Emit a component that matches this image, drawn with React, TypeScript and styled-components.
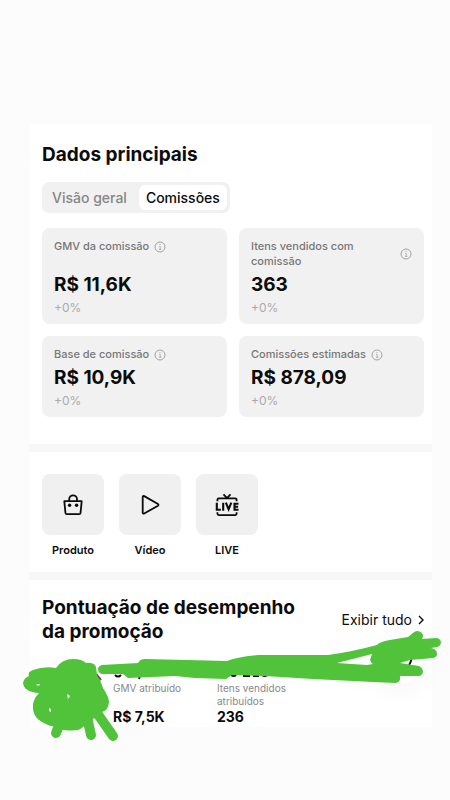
import React from "react";
import styled, { createGlobalStyle } from "styled-components";

const GlobalStyle = createGlobalStyle`
  * { box-sizing: border-box; }
  body {
    margin: 0;
    background: #fcfcfc;
    color: #0b0b0b;
    font-family: Inter, "Noto Sans", sans-serif;
  }
  h2, p, dl, dt, dd { margin: 0; }
  button { font: inherit; color: inherit; border: 0; padding: 0; background: none; cursor: pointer; }
`;

const Page = styled.main`
  padding: 124px 18px 74px 30px;
`;

const Panel = styled.div`
  background: #fff;
`;

const Section = styled.section<{ $pad: string }>`
  position: relative;
  padding: ${(p) => p.$pad};
  & + & { border-top: 8px solid #f7f7f7; }
`;

const Title = styled.h2`
  font-size: 19px;
  line-height: 24px;
  font-weight: 700;
`;

const Tabs = styled.div`
  display: inline-flex;
  margin: 15px 0;
  padding: 3px;
  border-radius: 7px;
  background: #f1f1f1;
`;

const Tab = styled.button<{ $active?: boolean }>`
  && {
    height: 25px;
    padding: 0 7px;
    border-radius: 6px;
    font-size: 14px;
    font-weight: 500;
    color: ${(p) => (p.$active ? "#0b0b0b" : "#868686")};
    background: ${(p) => (p.$active ? "#fff" : "transparent")};
  }
  & + & { margin-left: 5px; }
`;

const Cards = styled.div`
  display: grid;
  grid-template-columns: 1fr 1fr;
  gap: 12px;
`;

const Card = styled.article`
  display: flex;
  flex-direction: column;
  padding: 11px 12px 8px;
  border-radius: 8px;
  background: #f1f1f1;
`;

const CardLabel = styled.div`
  display: flex;
  align-items: center;
  gap: 5px;
  font-size: 11px;
  line-height: 15px;
  font-weight: 500;
  color: #777;
  svg { flex: none; }
`;

const Value = styled.strong`
  margin-top: auto;
  padding-top: 4px;
  font-size: 19px;
  line-height: 24px;
  font-weight: 700;
`;

const Delta = styled.span`
  margin-top: 3px;
  font-size: 12px;
  line-height: 16px;
  color: #aaa;
`;

const Shortcuts = styled.nav`
  display: flex;
  gap: 15px;
`;

const Shortcut = styled.button`
  display: flex;
  flex-direction: column;
  align-items: center;
  gap: 8px;
  && { font-size: 11px; line-height: 14px; font-weight: 600; }
`;

const Tile = styled.span`
  display: grid;
  place-items: center;
  width: 62px;
  height: 61px;
  border-radius: 8px;
  background: #f0f0f0;
`;

const ScoreHeader = styled.div`
  display: flex;
  align-items: center;
  justify-content: space-between;
  gap: 24px;
`;

const ShowAll = styled.a`
  display: flex;
  align-items: center;
  gap: 6px;
  flex: none;
  font-size: 14px;
  line-height: 20px;
  color: inherit;
  text-decoration: none;
`;

const ScoreStats = styled.dl`
  display: grid;
  grid-template-columns: 104px 104px;
  margin: 38px 0 0 71px;
`;

const Stat = styled.div`
  display: flex;
  flex-direction: column;
  dt { font-size: 10px; line-height: 13px; color: #888; width: 88px; }
  dd { margin-top: auto; font-size: 14px; line-height: 17px; font-weight: 700; }
`;

const FloatingButton = styled.button`
  && {
    position: absolute;
    right: 10px;
    top: 60px;
    width: 44px;
    height: 44px;
    border-radius: 50%;
    background: #fefefe;
    box-shadow: 0 4px 28px rgba(0, 0, 0, 0.05);
  }
`;

const Scribble = styled.svg`
  position: absolute;
  left: -30px;
  top: 50px;
  width: 450px;
  height: 116px;
  pointer-events: none;
`;

const InfoIcon = () => (
  <svg width="12" height="12" viewBox="0 0 12 12" fill="none" stroke="#a3a3a3" aria-hidden="true">
    <circle cx="6" cy="6" r="5" />
    <path d="M5.2 5.3H6.2v3M5 8.4h2.4" strokeWidth=".8" />
    <circle cx="6" cy="3.5" r=".6" fill="#a3a3a3" stroke="none" />
  </svg>
);

const BagIcon = () => (
  <svg width="24" height="24" viewBox="0 0 24 24" fill="none" stroke="#0b0b0b" strokeWidth="1.8" strokeLinejoin="round" aria-hidden="true">
    <path d="M3.3 8.2h17.4l-1.2 12a1.2 1.2 0 0 1-1.2 1H5.7a1.2 1.2 0 0 1-1.2-1z" />
    <path d="M8.2 8V6.2a3.9 3.9 0 0 1 7.8 0V8" />
    <circle cx="8.6" cy="12.3" r="1.7" fill="#0b0b0b" stroke="none" />
    <circle cx="15.6" cy="12.3" r="1.7" fill="#0b0b0b" stroke="none" />
  </svg>
);

const PlayIcon = () => (
  <svg width="24" height="24" viewBox="0 0 24 24" fill="none" stroke="#0b0b0b" strokeWidth="1.8" strokeLinejoin="round" aria-hidden="true">
    <path d="M6.2 3.1 20 11a1 1 0 0 1 0 1.7L6.2 20.5a1 1 0 0 1-1.5-.9V4a1 1 0 0 1 1.5-.9z" />
  </svg>
);

const LiveIcon = () => (
  <svg width="26" height="24" viewBox="0 0 26 24" fill="none" stroke="#0b0b0b" strokeWidth="1.8" aria-hidden="true">
    <path d="M9.5 1.3 13 5l3.5-3.7M3.4 8.2V6.8A1.5 1.5 0 0 1 4.9 5.3h16.2a1.5 1.5 0 0 1 1.5 1.5v1.4M3.4 19.2v1.4a1.5 1.5 0 0 0 1.5 1.5h16.2a1.5 1.5 0 0 0 1.5-1.5v-1.4" />
    <g strokeWidth="2.1">
      <path d="M2.8 9.7v7h4M9.2 9.7v8M11.9 9.7l2.7 6.6 2.7-6.6M24.5 10.7h-4v6h4M20.5 13.7h3.6" />
    </g>
  </svg>
);

const metrics = [
  { label: "GMV da comissão", value: "R$ 11,6K" },
  { label: "Itens vendidos com comissão", value: "363" },
  { label: "Base de comissão", value: "R$ 10,9K" },
  { label: "Comissões estimadas", value: "R$ 878,09" },
];

const shortcuts = [
  { label: "Produto", icon: <BagIcon /> },
  { label: "Vídeo", icon: <PlayIcon /> },
  { label: "LIVE", icon: <LiveIcon /> },
];

export default function App() {
  return (
    <>
      <GlobalStyle />
      <Page>
        <Panel>
          <Section $pad="19px 8px 27px 12px">
            <Title>Dados principais</Title>
            <Tabs role="tablist">
              <Tab role="tab" aria-selected={false}>Visão geral</Tab>
              <Tab role="tab" aria-selected $active>Comissões</Tab>
            </Tabs>
            <Cards>
              {metrics.map((m) => (
                <Card key={m.label}>
                  <CardLabel>
                    <span>{m.label}</span>
                    <InfoIcon />
                  </CardLabel>
                  <Value>{m.value}</Value>
                  <Delta>+0%</Delta>
                </Card>
              ))}
            </Cards>
          </Section>

          <Section $pad="22px 8px 15px 12px">
            <Shortcuts>
              {shortcuts.map((s) => (
                <Shortcut key={s.label}>
                  <Tile>{s.icon}</Tile>
                  {s.label}
                </Shortcut>
              ))}
            </Shortcuts>
          </Section>

          <Section $pad="16px 8px 2px 12px">
            <ScoreHeader>
              <Title>Pontuação de desempenho da promoção</Title>
              <ShowAll href="#pontuacao">
                Exibir tudo
                <svg width="6" height="10" viewBox="0 0 6 10" fill="none" stroke="#0b0b0b" strokeWidth="1.4" aria-hidden="true">
                  <path d="M1 1l4 4-4 4" />
                </svg>
              </ShowAll>
            </ScoreHeader>
            <ScoreStats>
              <Stat>
                <dt>GMV atribuído</dt>
                <dd>R$ 7,5K</dd>
              </Stat>
              <Stat>
                <dt>Itens vendidos atribuídos</dt>
                <dd>236</dd>
              </Stat>
            </ScoreStats>
            <FloatingButton aria-label="Abrir" />
            <Scribble viewBox="0 630 450 116" aria-hidden="true">
              <path
                d="M115 675q3 3 6 0M140 675l-1 4M225 677l1-2M231 675q3 2 5 0M243 676h7M253 676h6M262 675q3 2 5 0M411 657q1 4-2 8"
                fill="none"
                stroke="#0b0b0b"
                strokeWidth="2"
              />
              <path d="M96 674l5 6" stroke="#6b4a52" strokeWidth="2" />
              <g fill="#50c33a" stroke="#50c33a" strokeLinejoin="round" strokeLinecap="round">
                <path
                  fillRule="evenodd"
                  stroke="none"
                  d="M23 683Q24 678 29 676Q27 672 33 670Q44 666 56 668Q62 659 73 659Q82 659 86 663Q94 662 96 667L97 675Q101 681 103 688Q109 697 109 702Q108 711 102 712L83 727Q79 731 76 730Q64 732 55 727Q34 722 33 709Q32 700 39 693Q24 692 23 683ZM36 685q2 1 4 0q-1-2-4 0ZM67 694l3 2-2 3ZM49 708l2 1v3l-2-1Z"
                />
                <path d="M97 713l16 23M87 717l4 18M60 723l-4 10" fill="none" strokeWidth="10" />
                <path
                  fillRule="evenodd"
                  stroke="none"
                  d="M102 665L138 663Q140 659 145 659L227 661Q236 657 258 655L328 655Q351 652 377 645Q379 642 390 640L408 637L413 633Q417 629 422 633Q424 636 422 639L436 638Q440 638 441 642Q441 646 437 647L431 648Q437 649 437 654Q437 657 433 658L410 660L400 663L419 666Q423 668 423 672Q422 676 419 676L400 676Q401 682 396 683L373 682L313 679L265 676L232 675L226 679L195 678L175 676L128 678L123 674L102 674Q98 673 98 669Q98 666 102 665ZM337 663L372 654L370 660Q371 663 373 664L367 665Z"
                />
              </g>
            </Scribble>
          </Section>
        </Panel>
      </Page>
    </>
  );
}
